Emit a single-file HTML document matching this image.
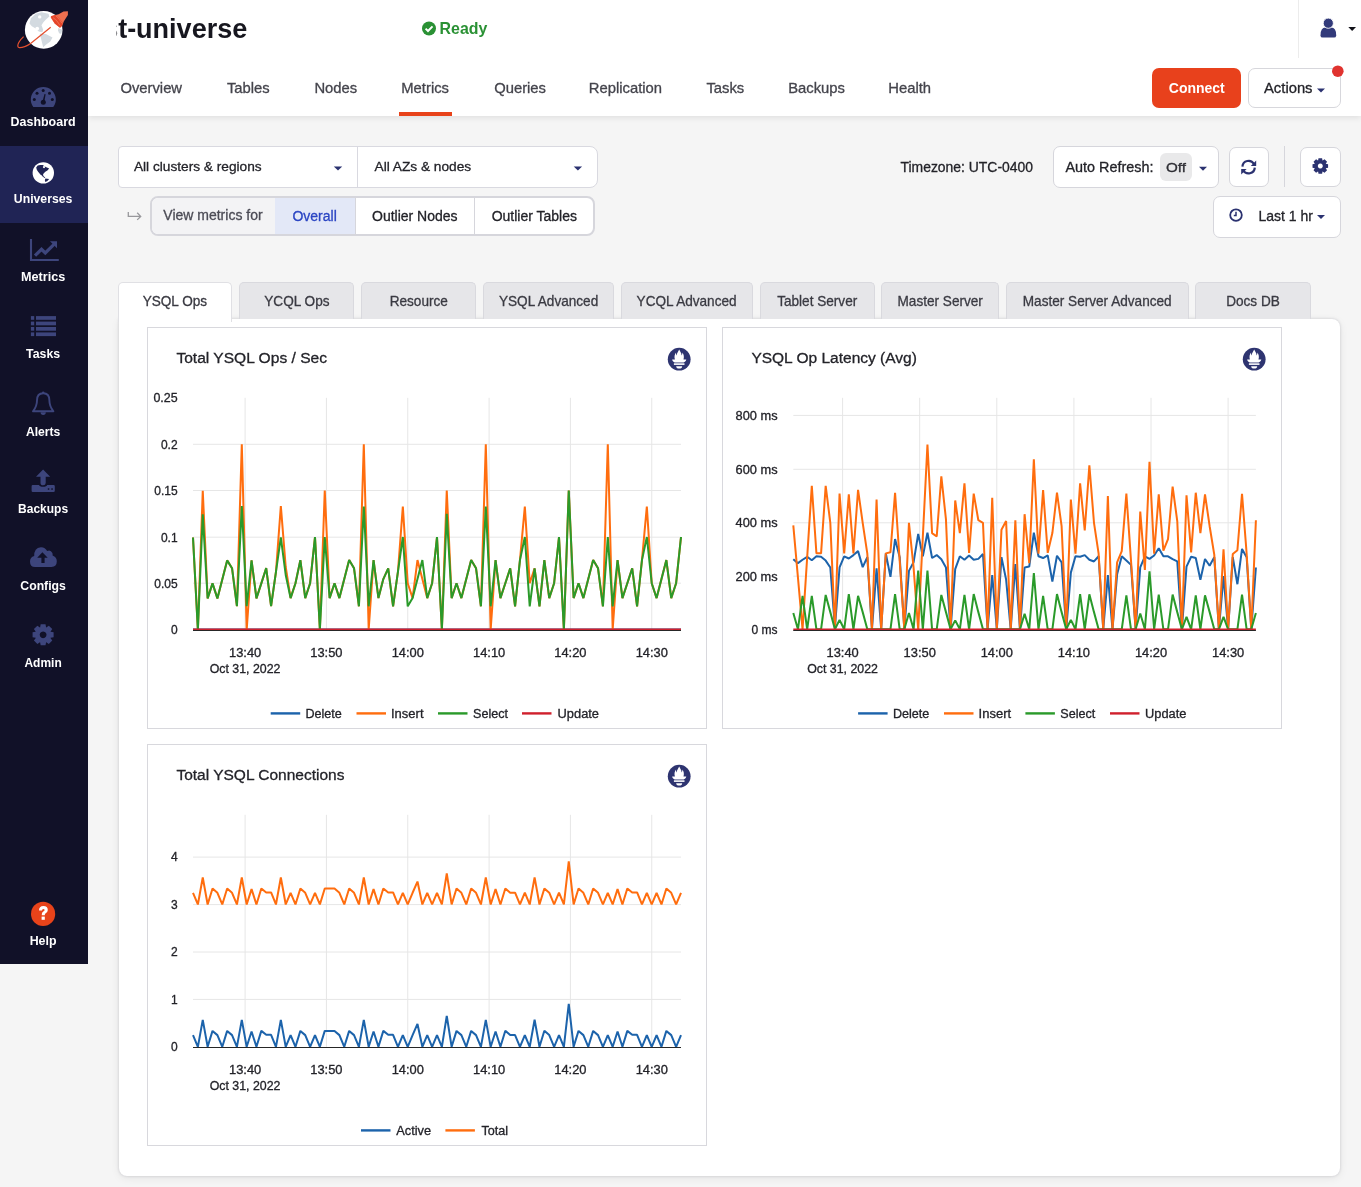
<!DOCTYPE html>
<html><head><meta charset="utf-8">
<style>
*{box-sizing:border-box;margin:0;padding:0}
html,body{width:1361px;height:1187px;overflow:hidden;background:#f5f5f5;font-family:"Liberation Sans",sans-serif}
svg text{font-family:"Liberation Sans",sans-serif}
</style></head><body>
<div style="position:absolute;left:0;top:0;width:88px;height:964px;background:#111128"></div>
<div style="position:absolute;left:0;top:146px;width:88px;height:77px;background:#202455"></div>
<div style="position:absolute;left:88px;top:0;width:1273px;height:116px;background:#fff;box-shadow:0 2px 6px rgba(0,0,0,0.085);clip-path:inset(0 0 -12px 0)"></div>
<div style="position:absolute;left:1298px;top:0;width:1px;height:58px;background:#ececec"></div>
<div style="position:absolute;left:399px;top:112px;width:53px;height:4px;background:#e8431a"></div>
<div style="position:absolute;left:1152px;top:68px;width:89px;height:40px;background:#e8411c;border-radius:7px"></div>
<div style="position:absolute;left:1248px;top:68px;width:93px;height:40px;background:#fff;border:1px solid #d7d7dc;border-radius:7px"></div>
<div style="position:absolute;left:118px;top:146px;width:480px;height:42px;background:#fff;border:1px solid #d9d9e0;border-radius:4px 8px 8px 4px"></div>
<div style="position:absolute;left:357px;top:147px;width:1px;height:40px;background:#d9d9e0"></div>
<div style="position:absolute;left:150px;top:196px;width:445px;height:40px;background:#fff;border:2px solid #d6d6dc;border-radius:8px"></div>
<div style="position:absolute;left:152px;top:198px;width:123px;height:36px;background:#f3f3f5;border-radius:6px 0 0 6px"></div>
<div style="position:absolute;left:275px;top:198px;width:80px;height:36px;background:#e3e8f7"></div>
<div style="position:absolute;left:355px;top:198px;width:1px;height:36px;background:#d6d6dc"></div>
<div style="position:absolute;left:474px;top:198px;width:1px;height:36px;background:#d6d6dc"></div>
<div style="position:absolute;left:1053px;top:146px;width:166px;height:42px;background:#fff;border:1px solid #d6d6dc;border-radius:7px"></div>
<div style="position:absolute;left:1160px;top:153px;width:32px;height:28px;background:#e9e9ea;border-radius:6px"></div>
<div style="position:absolute;left:1229px;top:147px;width:40px;height:40px;background:#fff;border:1px solid #d6d6dc;border-radius:7px"></div>
<div style="position:absolute;left:1284px;top:146px;width:1px;height:41px;background:#d6d6dc"></div>
<div style="position:absolute;left:1300px;top:147px;width:41px;height:40px;background:#fff;border:1px solid #d6d6dc;border-radius:7px"></div>
<div style="position:absolute;left:1213px;top:196px;width:128px;height:42px;background:#fff;border:1px solid #d6d6dc;border-radius:7px"></div>
<div style="position:absolute;left:119px;top:319px;width:1221px;height:857px;background:#fff;border-radius:0 8px 8px 8px;box-shadow:0 0 3px rgba(20,20,50,0.17), 0 2px 10px rgba(0,0,0,0.07)"></div>
<div style="position:absolute;left:117.6px;top:282px;width:114.7px;height:40px;background:#fff;border:1px solid #e0e0e4;border-bottom:none;border-radius:5px 5px 0 0"></div>
<div style="position:absolute;left:239.3px;top:282px;width:115.2px;height:37px;background:#e6e6e9;border:1px solid #d9d9de;border-bottom:none;border-radius:5px 5px 0 0"></div>
<div style="position:absolute;left:361.1px;top:282px;width:115.4px;height:37px;background:#e6e6e9;border:1px solid #d9d9de;border-bottom:none;border-radius:5px 5px 0 0"></div>
<div style="position:absolute;left:483.4px;top:282px;width:130.5px;height:37px;background:#e6e6e9;border:1px solid #d9d9de;border-bottom:none;border-radius:5px 5px 0 0"></div>
<div style="position:absolute;left:620.5px;top:282px;width:132.2px;height:37px;background:#e6e6e9;border:1px solid #d9d9de;border-bottom:none;border-radius:5px 5px 0 0"></div>
<div style="position:absolute;left:759.7px;top:282px;width:115.1px;height:37px;background:#e6e6e9;border:1px solid #d9d9de;border-bottom:none;border-radius:5px 5px 0 0"></div>
<div style="position:absolute;left:881.4px;top:282px;width:117.7px;height:37px;background:#e6e6e9;border:1px solid #d9d9de;border-bottom:none;border-radius:5px 5px 0 0"></div>
<div style="position:absolute;left:1005.7px;top:282px;width:183.0px;height:37px;background:#e6e6e9;border:1px solid #d9d9de;border-bottom:none;border-radius:5px 5px 0 0"></div>
<div style="position:absolute;left:1195.3px;top:282px;width:115.5px;height:37px;background:#e6e6e9;border:1px solid #d9d9de;border-bottom:none;border-radius:5px 5px 0 0"></div>
<div style="position:absolute;left:147px;top:327px;width:560px;height:402px;background:#fff;border:1px solid #d8d8dd"></div>
<div style="position:absolute;left:722px;top:327px;width:560px;height:402px;background:#fff;border:1px solid #d8d8dd"></div>
<div style="position:absolute;left:147px;top:744px;width:560px;height:402px;background:#fff;border:1px solid #d8d8dd"></div>
<svg style="position:absolute;left:0;top:0;will-change:transform" width="1361" height="1187" viewBox="0 0 1361 1187">
<text x="43.1" y="126.3" font-size="12.50" fill="#ffffff" font-weight="bold" text-anchor="middle" textLength="65.0" lengthAdjust="spacingAndGlyphs">Dashboard</text>
<text x="43.1" y="203.4" font-size="12.50" fill="#ffffff" font-weight="bold" text-anchor="middle" textLength="58.6" lengthAdjust="spacingAndGlyphs">Universes</text>
<text x="43.1" y="281.0" font-size="12.50" fill="#ffffff" font-weight="bold" text-anchor="middle" textLength="44.2" lengthAdjust="spacingAndGlyphs">Metrics</text>
<text x="43.1" y="358.1" font-size="12.50" fill="#ffffff" font-weight="bold" text-anchor="middle" textLength="34.0" lengthAdjust="spacingAndGlyphs">Tasks</text>
<text x="43.1" y="435.9" font-size="12.50" fill="#ffffff" font-weight="bold" text-anchor="middle" textLength="34.4" lengthAdjust="spacingAndGlyphs">Alerts</text>
<text x="43.1" y="513.2" font-size="12.50" fill="#ffffff" font-weight="bold" text-anchor="middle" textLength="50.0" lengthAdjust="spacingAndGlyphs">Backups</text>
<text x="43.1" y="590.0" font-size="12.50" fill="#ffffff" font-weight="bold" text-anchor="middle" textLength="45.6" lengthAdjust="spacingAndGlyphs">Configs</text>
<text x="43.1" y="666.6" font-size="12.50" fill="#ffffff" font-weight="bold" text-anchor="middle" textLength="37.2" lengthAdjust="spacingAndGlyphs">Admin</text>
<text x="43.1" y="944.7" font-size="12.50" fill="#ffffff" font-weight="bold" text-anchor="middle" textLength="26.8" lengthAdjust="spacingAndGlyphs">Help</text>
<g>
<circle cx="43.7" cy="29.9" r="18.8" fill="#ffffff"/>
<path d="M29.5 23.5 L30.9 18.2 L35.7 13.8 L41.5 12.3 L48.5 13.8 L49.4 16.5 L45.9 19.6 L43.2 22.6 L41.5 25.3 L43.2 29.7 L42.3 32.3 L38.8 31.5 L34.8 27.9 L31.8 26.2 Z" fill="#d3dae0"/>
<circle cx="39.7" cy="16.9" r="1.7" fill="#fff"/><circle cx="37.2" cy="28.6" r="1.9" fill="#fff"/>
<path d="M39.7 33.7 L45.9 34.1 L52.5 37.6 L50.3 41.6 L45.9 44.7 L43.2 47.3 L42.3 43.8 L41 38.5 Z" fill="#d3dae0"/>
<path d="M58.2 27.9 L62.2 29.7 L61.3 34.1 L59.1 33.2 L58 30.6 Z" fill="#d3dae0"/>
<path d="M51.2 16 L58.6 14.3 L63.5 11.6 L67.9 11.2 L67.9 15.1 L63.9 21.3 L62.2 25.7 L60 27.7 L54.7 23.5 L50.7 17.8 Z" fill="#ee6f4f"/>
<path d="M50.7 16.6 L55.5 14.8 L59.4 18.6 L62.5 22.5 L62.2 25.7 L60 27.7 L54.7 23.5 Z" fill="#e5452a"/>
<path d="M53 17.5 Q57.5 20.5 60 25.5 M55.8 15.8 Q59.5 19 61.8 23" stroke="#f07a5a" stroke-width="0.8" fill="none"/>
<path d="M50.7 27.2 L30.6 43.4 Q24 47.8 19.3 47.6 Q16.5 47 18.8 42.5 Q20.5 39.3 23.6 36.6" stroke="#e5502f" stroke-width="1.25" fill="none"/>
</g>
<path d="M33.3 107 A12.5 12.5 0 1 1 53.3 107 Z" fill="#3d457c"/>
<g fill="#111128"><circle cx="34.3" cy="99.6" r="1.5"/><circle cx="37" cy="93.3" r="1.5"/><circle cx="43.2" cy="90.5" r="1.5"/><circle cx="49.5" cy="93.3" r="1.5"/><circle cx="52.3" cy="99.6" r="1.5"/>
<circle cx="43.3" cy="102.2" r="2.5"/><path d="M42.4 102 L44.5 94 L45.6 94.3 L44.3 102 Z"/></g>
<circle cx="43.3" cy="172.9" r="10.7" fill="#ffffff"/>
<path d="M36.2 167.6 L37.7 165.5 L40.2 164.9 L42.7 165.1 L45.3 166.8 L49.1 168.5 L47.4 170.6 L45.3 171.8 L43.6 173.5 L43 174.8 L43.6 176.2 L45.3 177.6 L44.6 177.9 L42.6 176.4 L41.9 175.6 L40.6 174.8 L38.1 171.8 L36.8 169.7 Z" fill="#202455"/>
<circle cx="44" cy="167.1" r="1.1" fill="#fff"/>
<path d="M45.3 178.4 L49.1 179.1 L47.4 181.1 L45.3 181.9 L44.9 180.3 Z" fill="#202455"/>
<path d="M31 239 V260 H58.8" stroke="#3d457c" stroke-width="2.1" fill="none"/>
<path d="M35 255.7 L41.5 249.3 L45.3 253 L54 244.3" stroke="#3d457c" stroke-width="3.2" fill="none" stroke-linejoin="miter"/>
<path d="M50 241.2 L57 241.2 L57 248.2 Z" fill="#3d457c"/>
<rect x="30.9" y="316.1" width="3.3" height="3.7" rx="0" fill="#3d457c"/>
<rect x="36.0" y="316.1" width="20.0" height="3.7" rx="0" fill="#3d457c"/>
<rect x="30.9" y="321.6" width="3.3" height="3.7" rx="0" fill="#3d457c"/>
<rect x="36.0" y="321.6" width="20.0" height="3.7" rx="0" fill="#3d457c"/>
<rect x="30.9" y="327.0" width="3.3" height="3.7" rx="0" fill="#3d457c"/>
<rect x="36.0" y="327.0" width="20.0" height="3.7" rx="0" fill="#3d457c"/>
<rect x="30.9" y="332.4" width="3.3" height="3.7" rx="0" fill="#3d457c"/>
<rect x="36.0" y="332.4" width="20.0" height="3.7" rx="0" fill="#3d457c"/>
<path d="M43.2 393.3 C38.5 393.3 37 397 37 400.5 C37 405 35.6 408 33 411.3 L53.4 411.3 C50.8 408 49.4 405 49.4 400.5 C49.4 397 47.9 393.3 43.2 393.3 Z" stroke="#3d457c" stroke-width="1.9" fill="none" stroke-linejoin="round"/>
<circle cx="43.2" cy="392.6" r="1.2" fill="#3d457c"/>
<path d="M40.6 412.3 A2.6 2.6 0 0 0 45.8 412.3 Z" fill="#3d457c"/>
<path d="M43.1 469.6 L50.2 476.7 L45.7 476.7 L45.7 483 Q45.7 485.3 43.1 485.3 Q40.5 485.3 40.5 483 L40.5 476.7 L36 476.7 Z" fill="#3d457c"/>
<path d="M32.8 485 L39 485 Q39.5 486.8 43.1 486.8 Q46.7 486.8 47.2 485 L53.6 485 Q54.8 485 54.8 486.2 L54.8 490.8 Q54.8 492 53.6 492 L32.8 492 Q31.6 492 31.6 490.8 L31.6 486.2 Q31.6 485 32.8 485 Z" fill="#3d457c"/>
<rect x="47.8" y="488.3" width="1.5" height="1.5" fill="#111128"/><rect x="51.3" y="488.3" width="1.5" height="1.5" fill="#111128"/>
<path d="M35 567 Q30 567 30 561.5 Q30 557 34.2 556 Q34 548 40.8 547.2 Q45 547 47.2 551 Q50.5 549.3 52.4 553 Q52.8 554.5 52.6 555.5 Q56.8 557 56.8 561.3 Q56.8 567 51.5 567 Z" fill="#3d457c"/>
<path d="M42.4 552.2 L47.7 557.8 L44.6 557.8 L44.6 563 L41.4 563 L41.4 557.8 L37.2 557.8 Z" fill="#111128"/>
<path d="M40.67 624.28 L45.53 624.28 L46.10 627.38 L46.23 627.44 L48.82 625.64 L52.26 629.08 L50.46 631.67 L50.52 631.80 L53.62 632.37 L53.62 637.23 L50.52 637.80 L50.46 637.93 L52.26 640.52 L48.82 643.96 L46.23 642.16 L46.10 642.22 L45.53 645.32 L40.67 645.32 L40.10 642.22 L39.97 642.16 L37.38 643.96 L33.94 640.52 L35.74 637.93 L35.68 637.80 L32.58 637.23 L32.58 632.37 L35.68 631.80 L35.74 631.67 L33.94 629.08 L37.38 625.64 L39.97 627.44 L40.10 627.38 Z M43.1 631.4 a3.4 3.4 0 1 0 0.01 0 Z" fill="#3d457c" fill-rule="evenodd"/>
<circle cx="43.1" cy="913.9" r="12.1" fill="#e8431a"/>
<path d="M39 910.6 Q39 906 43.4 906 Q47.8 906 47.8 910 Q47.8 912.3 45.4 913.5 Q44.8 913.9 44.8 915.3 L41.7 915.3 Q41.5 912.4 43.6 911.3 Q44.6 910.8 44.6 910 Q44.6 908.9 43.3 908.9 Q42 908.9 42 910.6 Z" fill="#fff"/>
<rect x="41.6" y="916.6" width="3.2" height="3.2" fill="#fff"/>
<clipPath id="tclip"><rect x="116.5" y="0" width="300" height="60"/></clipPath>
<text x="247.2" y="37.5" font-size="27.00" fill="#17171f" font-weight="bold" text-anchor="end" clip-path="url(#tclip)">st-universe</text>
<circle cx="429" cy="28.5" r="7" fill="#2a9134"/><path d="M425.6 28.6 L428 31 L432.5 26.4" stroke="#fff" stroke-width="2" fill="none"/>
<text x="439.6" y="34.4" font-size="16.50" fill="#2a9134" font-weight="bold" text-anchor="start" textLength="47.8" lengthAdjust="spacingAndGlyphs">Ready</text>
<path d="M1320.5 35.4 Q1320.5 27.6 1325.5 27.6 H1331.2 Q1336.2 27.6 1336.2 35.4 Q1336.2 37.6 1334 37.6 H1322.7 Q1320.5 37.6 1320.5 35.4 Z" fill="#323a7a"/><circle cx="1328.3" cy="23.2" r="5.1" fill="#323a7a" stroke="#fff" stroke-width="0.9"/>
<path d="M1348.3 27.1 L1356 27.1 L1352.15 31 Z" fill="#111118"/>
<text x="120.4" y="93.2" font-size="14.80" fill="#44444c" stroke="#44444c" stroke-width="0.3" text-anchor="start">Overview</text>
<text x="226.9" y="93.2" font-size="14.80" fill="#44444c" stroke="#44444c" stroke-width="0.3" text-anchor="start">Tables</text>
<text x="314.4" y="93.2" font-size="14.80" fill="#44444c" stroke="#44444c" stroke-width="0.3" text-anchor="start">Nodes</text>
<text x="401.3" y="93.2" font-size="14.80" fill="#44444c" stroke="#44444c" stroke-width="0.3" text-anchor="start">Metrics</text>
<text x="494.2" y="93.2" font-size="14.80" fill="#44444c" stroke="#44444c" stroke-width="0.3" text-anchor="start">Queries</text>
<text x="588.8" y="93.2" font-size="14.80" fill="#44444c" stroke="#44444c" stroke-width="0.3" text-anchor="start">Replication</text>
<text x="706.4" y="93.2" font-size="14.80" fill="#44444c" stroke="#44444c" stroke-width="0.3" text-anchor="start">Tasks</text>
<text x="788.2" y="93.2" font-size="14.80" fill="#44444c" stroke="#44444c" stroke-width="0.3" text-anchor="start">Backups</text>
<text x="888.3" y="93.2" font-size="14.80" fill="#44444c" stroke="#44444c" stroke-width="0.3" text-anchor="start">Health</text>
<text x="1196.8" y="93.3" font-size="14.80" fill="#ffffff" font-weight="bold" text-anchor="middle" textLength="56.0" lengthAdjust="spacingAndGlyphs">Connect</text>
<text x="1264.0" y="93.3" font-size="14.80" fill="#232329" stroke="#232329" stroke-width="0.3" text-anchor="start">Actions</text>
<path d="M1317 88.5 L1325 88.5 L1321 92.5 Z" fill="#2b3270"/>
<circle cx="1337.8" cy="71.2" r="5.8" fill="#e0332f"/>
<text x="133.9" y="171.2" font-size="13.70" fill="#232329" stroke="#232329" stroke-width="0.3" text-anchor="start">All clusters &amp; regions</text>
<text x="374.5" y="171.2" font-size="13.70" fill="#232329" stroke="#232329" stroke-width="0.3" text-anchor="start">All AZs &amp; nodes</text>
<path d="M333.8 166.6 L342.2 166.6 L338 170.6 Z" fill="#2b3270"/>
<path d="M573.7 166.6 L582.1 166.6 L577.9 170.6 Z" fill="#2b3270"/>
<path d="M128.3 212 V216.4 H140.3 M137.2 212.8 L140.7 216.4 L137.2 219.9" stroke="#98989c" stroke-width="1.3" fill="none"/>
<text x="163.3" y="220.3" font-size="14.00" fill="#4b4b55" stroke="#4b4b55" stroke-width="0.3" text-anchor="start">View metrics for</text>
<text x="314.6" y="221.0" font-size="14.00" fill="#2b45c3" stroke="#2b45c3" stroke-width="0.3" text-anchor="middle">Overall</text>
<text x="414.8" y="221.0" font-size="14.00" fill="#232329" stroke="#232329" stroke-width="0.3" text-anchor="middle">Outlier Nodes</text>
<text x="534.3" y="221.0" font-size="14.00" fill="#232329" stroke="#232329" stroke-width="0.3" text-anchor="middle">Outlier Tables</text>
<text x="900.5" y="172.0" font-size="14.00" fill="#232329" stroke="#232329" stroke-width="0.3" text-anchor="start" textLength="132.5" lengthAdjust="spacingAndGlyphs">Timezone: UTC-0400</text>
<text x="1065.4" y="172.0" font-size="14.30" fill="#232329" stroke="#232329" stroke-width="0.3" text-anchor="start" textLength="88.0" lengthAdjust="spacingAndGlyphs">Auto Refresh:</text>
<text x="1176.0" y="172.2" font-size="13.00" fill="#2e2e34" stroke="#2e2e34" stroke-width="0.3" text-anchor="middle" textLength="20.0" lengthAdjust="spacingAndGlyphs">Off</text>
<path d="M1199 166.8 L1207 166.8 L1203 170.8 Z" fill="#2b3270"/>
<g fill="none" stroke="#2b3270" stroke-width="2.2"><path d="M1242.4 166.6 A6.2 6.2 0 0 1 1254 164"/><path d="M1254.8 167.6 A6.2 6.2 0 0 1 1243.2 170.2"/></g>
<path d="M1256.2 160.6 L1256.2 166 L1250.8 166 Z" fill="#2b3270"/><path d="M1241.2 174.4 L1241.2 169 L1246.6 169 Z" fill="#2b3270"/>
<path d="M1318.50 158.21 L1322.10 158.21 L1322.51 160.53 L1322.61 160.57 L1324.54 159.22 L1327.08 161.76 L1325.73 163.69 L1325.77 163.79 L1328.09 164.20 L1328.09 167.80 L1325.77 168.21 L1325.73 168.31 L1327.08 170.24 L1324.54 172.78 L1322.61 171.43 L1322.51 171.47 L1322.10 173.79 L1318.50 173.79 L1318.09 171.47 L1317.99 171.43 L1316.06 172.78 L1313.52 170.24 L1314.87 168.31 L1314.83 168.21 L1312.51 167.80 L1312.51 164.20 L1314.83 163.79 L1314.87 163.69 L1313.52 161.76 L1316.06 159.22 L1317.99 160.57 L1318.09 160.53 Z M1320.3 163.5 a2.5 2.5 0 1 0 0.01 0 Z" fill="#2b3270" fill-rule="evenodd"/>
<circle cx="1236" cy="215.1" r="5.8" fill="none" stroke="#2b3270" stroke-width="1.8"/><path d="M1236 211.8 V215.6 H1233.8" fill="none" stroke="#2b3270" stroke-width="1.5"/>
<text x="1258.4" y="220.8" font-size="14.80" fill="#232329" stroke="#232329" stroke-width="0.3" text-anchor="start" textLength="54.5" lengthAdjust="spacingAndGlyphs">Last 1 hr</text>
<path d="M1317 215 L1325 215 L1321 219 Z" fill="#2b3270"/>
<text x="174.9" y="305.8" font-size="14.20" fill="#3a3a42" stroke="#3a3a42" stroke-width="0.3" text-anchor="middle" textLength="64.5" lengthAdjust="spacingAndGlyphs">YSQL Ops</text>
<text x="296.9" y="305.8" font-size="14.20" fill="#3a3a42" stroke="#3a3a42" stroke-width="0.3" text-anchor="middle" textLength="65.3" lengthAdjust="spacingAndGlyphs">YCQL Ops</text>
<text x="418.8" y="305.8" font-size="14.20" fill="#3a3a42" stroke="#3a3a42" stroke-width="0.3" text-anchor="middle" textLength="58.2" lengthAdjust="spacingAndGlyphs">Resource</text>
<text x="548.6" y="305.8" font-size="14.20" fill="#3a3a42" stroke="#3a3a42" stroke-width="0.3" text-anchor="middle" textLength="99.3" lengthAdjust="spacingAndGlyphs">YSQL Advanced</text>
<text x="686.6" y="305.8" font-size="14.20" fill="#3a3a42" stroke="#3a3a42" stroke-width="0.3" text-anchor="middle" textLength="100.0" lengthAdjust="spacingAndGlyphs">YCQL Advanced</text>
<text x="817.2" y="305.8" font-size="14.20" fill="#3a3a42" stroke="#3a3a42" stroke-width="0.3" text-anchor="middle" textLength="80.1" lengthAdjust="spacingAndGlyphs">Tablet Server</text>
<text x="940.2" y="305.8" font-size="14.20" fill="#3a3a42" stroke="#3a3a42" stroke-width="0.3" text-anchor="middle" textLength="85.4" lengthAdjust="spacingAndGlyphs">Master Server</text>
<text x="1097.2" y="305.8" font-size="14.20" fill="#3a3a42" stroke="#3a3a42" stroke-width="0.3" text-anchor="middle" textLength="148.9" lengthAdjust="spacingAndGlyphs">Master Server Advanced</text>
<text x="1253.0" y="305.8" font-size="14.20" fill="#3a3a42" stroke="#3a3a42" stroke-width="0.3" text-anchor="middle" textLength="53.7" lengthAdjust="spacingAndGlyphs">Docs DB</text>
<text x="176.4" y="363.1" font-size="15.50" fill="#232329" stroke="#232329" stroke-width="0.3" text-anchor="start" textLength="150.6" lengthAdjust="spacingAndGlyphs">Total YSQL Ops / Sec</text>
<circle cx="679.2" cy="359.2" r="11.4" fill="#2e3470"/>
<g transform="translate(679.20 359.20)" fill="#fff"><path d="M0 -9.6 C0.9 -7.2 2.6 -6.2 2.3 -3.6 C3.1 -4.4 3.3 -5.6 3.1 -6.6 C4.7 -4.6 5.1 -2.1 4.3 0.2 L7.1 0.4 C6.6 2.4 5.6 3 4.5 3.2 H-4.5 C-5.6 3 -6.6 2.4 -7.1 0.4 L-4.3 0.2 C-5.1 -2.1 -4.7 -4.6 -3.1 -6.6 C-3.3 -5.6 -3.1 -4.4 -2.3 -3.6 C-2.6 -6.2 -0.9 -7.2 0 -9.6 Z"/><rect x="-5.3" y="4.1" width="10.6" height="1.6"/><path d="M-3 7 H3 A3 2.3 0 0 1 -3 7 Z"/></g>
<line x1="193.0" y1="444.30" x2="681.0" y2="444.30" stroke="#e6e6e6" stroke-width="1"/>
<line x1="193.0" y1="490.50" x2="681.0" y2="490.50" stroke="#e6e6e6" stroke-width="1"/>
<line x1="193.0" y1="537.20" x2="681.0" y2="537.20" stroke="#e6e6e6" stroke-width="1"/>
<line x1="193.0" y1="583.20" x2="681.0" y2="583.20" stroke="#e6e6e6" stroke-width="1"/>
<line x1="245.10" y1="397.8" x2="245.10" y2="629.60" stroke="#e6e6e6" stroke-width="1"/>
<line x1="326.43" y1="397.8" x2="326.43" y2="629.60" stroke="#e6e6e6" stroke-width="1"/>
<line x1="407.76" y1="397.8" x2="407.76" y2="629.60" stroke="#e6e6e6" stroke-width="1"/>
<line x1="489.09" y1="397.8" x2="489.09" y2="629.60" stroke="#e6e6e6" stroke-width="1"/>
<line x1="570.42" y1="397.8" x2="570.42" y2="629.60" stroke="#e6e6e6" stroke-width="1"/>
<line x1="651.75" y1="397.8" x2="651.75" y2="629.60" stroke="#e6e6e6" stroke-width="1"/>
<text x="177.6" y="401.9" font-size="12.00" fill="#232329" stroke="#232329" stroke-width="0.3" text-anchor="end" textLength="24.2" lengthAdjust="spacingAndGlyphs">0.25</text>
<text x="177.6" y="448.6" font-size="12.00" fill="#232329" stroke="#232329" stroke-width="0.3" text-anchor="end">0.2</text>
<text x="177.6" y="494.8" font-size="12.00" fill="#232329" stroke="#232329" stroke-width="0.3" text-anchor="end">0.15</text>
<text x="177.6" y="541.5" font-size="12.00" fill="#232329" stroke="#232329" stroke-width="0.3" text-anchor="end">0.1</text>
<text x="177.6" y="587.5" font-size="12.00" fill="#232329" stroke="#232329" stroke-width="0.3" text-anchor="end">0.05</text>
<text x="177.6" y="633.9" font-size="12.00" fill="#232329" stroke="#232329" stroke-width="0.3" text-anchor="end">0</text>
<path d="M193.00 629.60 L197.88 629.60 L202.76 629.60 L207.64 629.60 L212.52 629.60 L217.40 629.60 L222.28 629.60 L227.16 629.60 L232.04 629.60 L236.92 629.60 L241.80 629.60 L246.68 629.60 L251.56 629.60 L256.44 629.60 L261.32 629.60 L266.20 629.60 L271.08 629.60 L275.96 629.60 L280.84 629.60 L285.72 629.60 L290.60 629.60 L295.48 629.60 L300.36 629.60 L305.24 629.60 L310.12 629.60 L315.00 629.60 L319.88 629.60 L324.76 629.60 L329.64 629.60 L334.52 629.60 L339.40 629.60 L344.28 629.60 L349.16 629.60 L354.04 629.60 L358.92 629.60 L363.80 629.60 L368.68 629.60 L373.56 629.60 L378.44 629.60 L383.32 629.60 L388.20 629.60 L393.08 629.60 L397.96 629.60 L402.84 629.60 L407.72 629.60 L412.60 629.60 L417.48 629.60 L422.36 629.60 L427.24 629.60 L432.12 629.60 L437.00 629.60 L441.88 629.60 L446.76 629.60 L451.64 629.60 L456.52 629.60 L461.40 629.60 L466.28 629.60 L471.16 629.60 L476.04 629.60 L480.92 629.60 L485.80 629.60 L490.68 629.60 L495.56 629.60 L500.44 629.60 L505.32 629.60 L510.20 629.60 L515.08 629.60 L519.96 629.60 L524.84 629.60 L529.72 629.60 L534.60 629.60 L539.48 629.60 L544.36 629.60 L549.24 629.60 L554.12 629.60 L559.00 629.60 L563.88 629.60 L568.76 629.60 L573.64 629.60 L578.52 629.60 L583.40 629.60 L588.28 629.60 L593.16 629.60 L598.04 629.60 L602.92 629.60 L607.80 629.60 L612.68 629.60 L617.56 629.60 L622.44 629.60 L627.32 629.60 L632.20 629.60 L637.08 629.60 L641.96 629.60 L646.84 629.60 L651.72 629.60 L656.60 629.60 L661.48 629.60 L666.36 629.60 L671.24 629.60 L676.12 629.60 L681.00 629.60" fill="none" stroke="#1c63ab" stroke-width="2.0" stroke-linejoin="bevel"/>
<path d="M193.00 537.43 L197.88 630.00 L202.76 490.79 L207.64 598.39 L212.52 583.37 L217.40 598.39 L222.28 579.40 L227.16 560.40 L232.04 568.17 L236.92 606.17 L241.80 444.34 L246.68 630.00 L251.56 560.40 L256.44 598.39 L261.32 583.37 L266.20 568.17 L271.08 606.17 L275.96 571.80 L280.84 505.99 L285.72 567.00 L290.60 598.07 L295.48 583.21 L300.36 560.11 L305.24 598.07 L310.12 583.21 L315.00 537.01 L319.88 629.42 L324.76 490.48 L329.64 598.07 L334.52 583.21 L339.40 598.07 L344.28 579.09 L349.16 560.11 L354.04 568.36 L358.92 606.32 L363.80 444.27 L368.68 629.42 L373.56 560.11 L378.44 598.07 L383.32 579.09 L388.20 568.36 L393.08 606.32 L397.96 571.66 L402.84 506.48 L407.72 583.21 L412.60 598.07 L417.48 560.11 L422.36 579.09 L427.24 598.07 L432.12 583.21 L437.00 537.01 L441.88 629.42 L446.76 490.48 L451.64 598.07 L456.52 583.21 L461.40 598.07 L466.28 579.09 L471.16 560.11 L476.04 568.36 L480.92 606.32 L485.80 444.27 L490.68 629.42 L495.56 560.11 L500.44 598.07 L505.32 583.21 L510.20 568.36 L515.08 606.32 L519.96 560.11 L524.84 506.48 L529.72 583.21 L534.60 568.36 L539.48 606.32 L544.36 560.11 L549.24 598.07 L554.12 583.21 L559.00 537.01 L563.88 629.42 L568.76 490.48 L573.64 598.07 L578.52 583.21 L583.40 598.07 L588.28 579.09 L593.16 560.11 L598.04 568.36 L602.92 606.32 L607.80 444.27 L612.68 629.42 L617.56 560.11 L622.44 598.07 L627.32 583.21 L632.20 568.36 L637.08 606.32 L641.96 560.11 L646.84 506.48 L651.72 583.21 L656.60 598.07 L661.48 579.09 L666.36 560.11 L671.24 598.07 L676.12 583.21 L681.00 537.01" fill="none" stroke="#ff6d0e" stroke-width="2.0" stroke-linejoin="bevel"/>
<path d="M193.00 537.43 L197.88 630.00 L202.76 514.28 L207.64 598.39 L212.52 583.37 L217.40 598.39 L222.28 579.40 L227.16 560.40 L232.04 568.17 L236.92 606.17 L241.80 505.99 L246.68 606.17 L251.56 560.40 L256.44 598.39 L261.32 583.37 L266.20 568.17 L271.08 606.17 L275.96 571.80 L280.84 537.43 L285.72 574.96 L290.60 598.07 L295.48 583.21 L300.36 560.11 L305.24 598.07 L310.12 583.21 L315.00 537.01 L319.88 629.42 L324.76 537.01 L329.64 598.07 L334.52 583.21 L339.40 598.07 L344.28 579.09 L349.16 560.11 L354.04 568.36 L358.92 606.32 L363.80 506.48 L368.68 606.32 L373.56 560.11 L378.44 598.07 L383.32 579.09 L388.20 568.36 L393.08 606.32 L397.96 571.66 L402.84 537.01 L407.72 606.32 L412.60 598.07 L417.48 579.09 L422.36 560.11 L427.24 598.07 L432.12 583.21 L437.00 537.01 L441.88 629.42 L446.76 513.91 L451.64 598.07 L456.52 583.21 L461.40 598.07 L466.28 579.09 L471.16 560.11 L476.04 568.36 L480.92 606.32 L485.80 506.48 L490.68 606.32 L495.56 560.11 L500.44 598.07 L505.32 583.21 L510.20 568.36 L515.08 606.32 L519.96 560.11 L524.84 537.01 L529.72 606.32 L534.60 568.36 L539.48 606.32 L544.36 560.11 L549.24 598.07 L554.12 583.21 L559.00 537.01 L563.88 629.42 L568.76 490.48 L573.64 598.07 L578.52 583.21 L583.40 598.07 L588.28 579.09 L593.16 560.11 L598.04 568.36 L602.92 606.32 L607.80 537.01 L612.68 606.32 L617.56 560.11 L622.44 598.07 L627.32 583.21 L632.20 568.36 L637.08 606.32 L641.96 560.11 L646.84 537.01 L651.72 583.21 L656.60 598.07 L661.48 579.09 L666.36 560.11 L671.24 598.07 L676.12 583.21 L681.00 537.01" fill="none" stroke="#2a9a2a" stroke-width="2.0" stroke-linejoin="bevel"/>
<path d="M193.00 629.60 L197.88 629.60 L202.76 629.60 L207.64 629.60 L212.52 629.60 L217.40 629.60 L222.28 629.60 L227.16 629.60 L232.04 629.60 L236.92 629.60 L241.80 629.60 L246.68 629.60 L251.56 629.60 L256.44 629.60 L261.32 629.60 L266.20 629.60 L271.08 629.60 L275.96 629.60 L280.84 629.60 L285.72 629.60 L290.60 629.60 L295.48 629.60 L300.36 629.60 L305.24 629.60 L310.12 629.60 L315.00 629.60 L319.88 629.60 L324.76 629.60 L329.64 629.60 L334.52 629.60 L339.40 629.60 L344.28 629.60 L349.16 629.60 L354.04 629.60 L358.92 629.60 L363.80 629.60 L368.68 629.60 L373.56 629.60 L378.44 629.60 L383.32 629.60 L388.20 629.60 L393.08 629.60 L397.96 629.60 L402.84 629.60 L407.72 629.60 L412.60 629.60 L417.48 629.60 L422.36 629.60 L427.24 629.60 L432.12 629.60 L437.00 629.60 L441.88 629.60 L446.76 629.60 L451.64 629.60 L456.52 629.60 L461.40 629.60 L466.28 629.60 L471.16 629.60 L476.04 629.60 L480.92 629.60 L485.80 629.60 L490.68 629.60 L495.56 629.60 L500.44 629.60 L505.32 629.60 L510.20 629.60 L515.08 629.60 L519.96 629.60 L524.84 629.60 L529.72 629.60 L534.60 629.60 L539.48 629.60 L544.36 629.60 L549.24 629.60 L554.12 629.60 L559.00 629.60 L563.88 629.60 L568.76 629.60 L573.64 629.60 L578.52 629.60 L583.40 629.60 L588.28 629.60 L593.16 629.60 L598.04 629.60 L602.92 629.60 L607.80 629.60 L612.68 629.60 L617.56 629.60 L622.44 629.60 L627.32 629.60 L632.20 629.60 L637.08 629.60 L641.96 629.60 L646.84 629.60 L651.72 629.60 L656.60 629.60 L661.48 629.60 L666.36 629.60 L671.24 629.60 L676.12 629.60 L681.00 629.60" fill="none" stroke="#d0202d" stroke-width="2.0" stroke-linejoin="bevel"/>
<line x1="193.0" y1="630.50" x2="681.0" y2="630.50" stroke="#262626" stroke-width="1"/>
<text x="245.1" y="657.0" font-size="12.00" fill="#232329" stroke="#232329" stroke-width="0.3" text-anchor="middle" textLength="32.2" lengthAdjust="spacingAndGlyphs">13:40</text>
<text x="326.4" y="657.0" font-size="12.00" fill="#232329" stroke="#232329" stroke-width="0.3" text-anchor="middle" textLength="32.2" lengthAdjust="spacingAndGlyphs">13:50</text>
<text x="407.8" y="657.0" font-size="12.00" fill="#232329" stroke="#232329" stroke-width="0.3" text-anchor="middle" textLength="32.2" lengthAdjust="spacingAndGlyphs">14:00</text>
<text x="489.1" y="657.0" font-size="12.00" fill="#232329" stroke="#232329" stroke-width="0.3" text-anchor="middle" textLength="32.2" lengthAdjust="spacingAndGlyphs">14:10</text>
<text x="570.4" y="657.0" font-size="12.00" fill="#232329" stroke="#232329" stroke-width="0.3" text-anchor="middle" textLength="32.2" lengthAdjust="spacingAndGlyphs">14:20</text>
<text x="651.8" y="657.0" font-size="12.00" fill="#232329" stroke="#232329" stroke-width="0.3" text-anchor="middle" textLength="32.2" lengthAdjust="spacingAndGlyphs">14:30</text>
<text x="245.1" y="672.7" font-size="12.00" fill="#232329" stroke="#232329" stroke-width="0.3" text-anchor="middle" textLength="70.8" lengthAdjust="spacingAndGlyphs">Oct 31, 2022</text>
<line x1="270.7" y1="713.4" x2="300.2" y2="713.4" stroke="#1c63ab" stroke-width="2.4"/>
<text x="305.4" y="718.0" font-size="12.50" fill="#232329" stroke="#232329" stroke-width="0.3" text-anchor="start" textLength="36.4" lengthAdjust="spacingAndGlyphs">Delete</text>
<line x1="356.5" y1="713.4" x2="386.0" y2="713.4" stroke="#ff6d0e" stroke-width="2.4"/>
<text x="391.0" y="718.0" font-size="12.50" fill="#232329" stroke="#232329" stroke-width="0.3" text-anchor="start" textLength="32.5" lengthAdjust="spacingAndGlyphs">Insert</text>
<line x1="438.0" y1="713.4" x2="467.5" y2="713.4" stroke="#2a9a2a" stroke-width="2.4"/>
<text x="473.0" y="718.0" font-size="12.50" fill="#232329" stroke="#232329" stroke-width="0.3" text-anchor="start" textLength="35.0" lengthAdjust="spacingAndGlyphs">Select</text>
<line x1="522.0" y1="713.4" x2="551.5" y2="713.4" stroke="#d0202d" stroke-width="2.4"/>
<text x="557.6" y="718.0" font-size="12.50" fill="#232329" stroke="#232329" stroke-width="0.3" text-anchor="start" textLength="41.4" lengthAdjust="spacingAndGlyphs">Update</text>
<text x="751.4" y="363.1" font-size="15.50" fill="#232329" stroke="#232329" stroke-width="0.3" text-anchor="start">YSQL Op Latency (Avg)</text>
<circle cx="1254.2" cy="359.2" r="11.4" fill="#2e3470"/>
<g transform="translate(1254.20 359.20)" fill="#fff"><path d="M0 -9.6 C0.9 -7.2 2.6 -6.2 2.3 -3.6 C3.1 -4.4 3.3 -5.6 3.1 -6.6 C4.7 -4.6 5.1 -2.1 4.3 0.2 L7.1 0.4 C6.6 2.4 5.6 3 4.5 3.2 H-4.5 C-5.6 3 -6.6 2.4 -7.1 0.4 L-4.3 0.2 C-5.1 -2.1 -4.7 -4.6 -3.1 -6.6 C-3.3 -5.6 -3.1 -4.4 -2.3 -3.6 C-2.6 -6.2 -0.9 -7.2 0 -9.6 Z"/><rect x="-5.3" y="4.1" width="10.6" height="1.6"/><path d="M-3 7 H3 A3 2.3 0 0 1 -3 7 Z"/></g>
<line x1="793.3" y1="415.40" x2="1255.9" y2="415.40" stroke="#e6e6e6" stroke-width="1"/>
<line x1="793.3" y1="469.30" x2="1255.9" y2="469.30" stroke="#e6e6e6" stroke-width="1"/>
<line x1="793.3" y1="522.80" x2="1255.9" y2="522.80" stroke="#e6e6e6" stroke-width="1"/>
<line x1="793.3" y1="576.20" x2="1255.9" y2="576.20" stroke="#e6e6e6" stroke-width="1"/>
<line x1="842.60" y1="397.8" x2="842.60" y2="629.40" stroke="#e6e6e6" stroke-width="1"/>
<line x1="919.70" y1="397.8" x2="919.70" y2="629.40" stroke="#e6e6e6" stroke-width="1"/>
<line x1="996.80" y1="397.8" x2="996.80" y2="629.40" stroke="#e6e6e6" stroke-width="1"/>
<line x1="1073.90" y1="397.8" x2="1073.90" y2="629.40" stroke="#e6e6e6" stroke-width="1"/>
<line x1="1151.00" y1="397.8" x2="1151.00" y2="629.40" stroke="#e6e6e6" stroke-width="1"/>
<line x1="1228.10" y1="397.8" x2="1228.10" y2="629.40" stroke="#e6e6e6" stroke-width="1"/>
<text x="777.6" y="419.6" font-size="12.00" fill="#232329" stroke="#232329" stroke-width="0.3" text-anchor="end" textLength="42.0" lengthAdjust="spacingAndGlyphs">800 ms</text>
<text x="777.6" y="473.6" font-size="12.00" fill="#232329" stroke="#232329" stroke-width="0.3" text-anchor="end" textLength="42.0" lengthAdjust="spacingAndGlyphs">600 ms</text>
<text x="777.6" y="527.0" font-size="12.00" fill="#232329" stroke="#232329" stroke-width="0.3" text-anchor="end" textLength="42.0" lengthAdjust="spacingAndGlyphs">400 ms</text>
<text x="777.6" y="580.5" font-size="12.00" fill="#232329" stroke="#232329" stroke-width="0.3" text-anchor="end" textLength="42.0" lengthAdjust="spacingAndGlyphs">200 ms</text>
<text x="777.6" y="633.9" font-size="12.00" fill="#232329" stroke="#232329" stroke-width="0.3" text-anchor="end">0 ms</text>
<path d="M793.30 559.21 L797.93 563.16 L802.55 559.73 L807.18 556.80 L811.80 560.24 L816.43 556.29 L821.06 556.80 L825.68 560.58 L830.31 567.46 L834.93 627.59 L839.56 567.46 L844.19 556.29 L848.81 558.52 L853.44 555.09 L858.06 551.13 L862.69 567.11 L867.32 557.15 L871.94 629.31 L876.57 568.32 L881.19 629.31 L885.82 553.37 L890.45 576.91 L895.07 539.11 L899.70 557.15 L904.32 629.31 L908.95 570.89 L913.58 562.30 L918.20 533.95 L922.83 556.29 L927.45 532.75 L932.08 558.01 L936.71 555.09 L941.33 559.30 L945.96 567.46 L950.58 629.31 L955.21 569.18 L959.84 556.29 L964.46 559.73 L969.09 555.43 L973.71 559.73 L978.34 558.87 L982.97 554.05 L987.59 629.31 L992.22 575.19 L996.84 629.31 L1001.47 557.15 L1006.10 579.48 L1010.72 629.31 L1015.35 564.02 L1019.97 629.31 L1024.60 567.46 L1029.23 566.60 L1033.85 532.75 L1038.48 556.29 L1043.10 558.01 L1047.73 555.43 L1052.36 581.55 L1056.98 555.77 L1061.61 562.30 L1066.23 629.31 L1070.86 572.61 L1075.49 556.29 L1080.11 556.80 L1084.74 555.09 L1089.36 559.73 L1093.99 561.44 L1098.62 556.29 L1103.24 629.31 L1107.87 575.19 L1112.49 629.31 L1117.12 574.33 L1121.75 556.29 L1126.37 560.58 L1131.00 564.88 L1135.62 629.31 L1140.25 567.46 L1144.88 556.29 L1149.50 558.87 L1154.13 555.43 L1158.75 548.21 L1163.38 556.29 L1168.01 556.29 L1172.63 559.21 L1177.26 561.44 L1181.88 629.31 L1186.51 566.60 L1191.14 556.80 L1195.76 558.01 L1200.39 579.83 L1205.01 559.04 L1209.64 565.74 L1214.27 557.15 L1218.89 629.31 L1223.52 576.05 L1228.14 629.31 L1232.77 557.15 L1237.40 584.21 L1242.02 548.90 L1246.65 557.15 L1251.27 629.31 L1255.90 567.46" fill="none" stroke="#1c63ab" stroke-width="2.0" stroke-linejoin="bevel"/>
<path d="M793.30 525.36 L797.93 577.42 L802.55 629.31 L807.18 557.15 L811.80 485.84 L816.43 553.37 L821.06 553.37 L825.68 485.84 L830.31 522.78 L834.93 629.31 L839.56 493.57 L844.19 553.37 L848.81 494.43 L853.44 553.37 L858.06 489.79 L862.69 522.78 L867.32 553.71 L871.94 629.31 L876.57 499.59 L881.19 629.31 L885.82 553.37 L890.45 552.34 L895.07 492.71 L899.70 560.93 L904.32 629.31 L908.95 522.78 L913.58 567.46 L918.20 629.31 L922.83 536.87 L927.45 444.60 L932.08 533.09 L936.71 536.53 L941.33 476.39 L945.96 519.35 L950.58 629.31 L955.21 500.45 L959.84 533.09 L964.46 483.26 L969.09 552.85 L973.71 493.57 L978.34 520.21 L982.97 522.78 L987.59 629.31 L992.22 497.87 L996.84 629.31 L1001.47 529.66 L1006.10 521.07 L1010.72 629.31 L1015.35 520.21 L1019.97 629.31 L1024.60 514.19 L1029.23 563.16 L1033.85 459.21 L1038.48 553.71 L1043.10 490.14 L1047.73 552.85 L1052.36 533.09 L1056.98 492.71 L1061.61 526.22 L1066.23 629.31 L1070.86 499.59 L1075.49 553.71 L1080.11 483.26 L1084.74 530.52 L1089.36 465.22 L1093.99 522.78 L1098.62 553.71 L1103.24 629.31 L1107.87 496.15 L1112.49 629.31 L1117.12 562.30 L1121.75 551.13 L1126.37 493.57 L1131.00 560.58 L1135.62 629.31 L1140.25 511.62 L1144.88 570.03 L1149.50 461.79 L1154.13 553.71 L1158.75 494.43 L1163.38 550.70 L1168.01 539.11 L1172.63 486.70 L1177.26 521.07 L1181.88 629.31 L1186.51 495.29 L1191.14 552.34 L1195.76 492.71 L1200.39 533.09 L1205.01 494.43 L1209.64 526.22 L1214.27 554.57 L1218.89 629.31 L1223.52 549.42 L1228.14 629.31 L1232.77 554.05 L1237.40 550.27 L1242.02 493.92 L1246.65 553.71 L1251.27 629.31 L1255.90 520.21" fill="none" stroke="#ff6d0e" stroke-width="2.0" stroke-linejoin="bevel"/>
<path d="M793.30 612.99 L797.93 629.31 L802.55 595.81 L807.18 629.31 L811.80 595.81 L816.43 629.31 L821.06 629.31 L825.68 594.95 L830.31 612.13 L834.93 629.31 L839.56 619.86 L844.19 629.31 L848.81 594.09 L853.44 629.31 L858.06 595.81 L862.69 612.13 L867.32 629.31 L871.94 629.31 L876.57 629.31 L881.19 629.31 L885.82 629.31 L890.45 629.31 L895.07 594.09 L899.70 629.31 L904.32 629.31 L908.95 612.99 L913.58 629.31 L918.20 570.55 L922.83 629.31 L927.45 570.55 L932.08 629.31 L936.71 629.31 L941.33 594.95 L945.96 612.13 L950.58 629.31 L955.21 620.38 L959.84 629.31 L964.46 594.95 L969.09 629.31 L973.71 594.09 L978.34 612.13 L982.97 629.31 L987.59 629.31 L992.22 629.31 L996.84 629.31 L1001.47 629.31 L1006.10 629.31 L1010.72 629.31 L1015.35 629.31 L1019.97 629.31 L1024.60 613.85 L1029.23 629.31 L1033.85 572.96 L1038.48 629.31 L1043.10 595.81 L1047.73 629.31 L1052.36 629.31 L1056.98 594.09 L1061.61 612.13 L1066.23 629.31 L1070.86 619.86 L1075.49 629.31 L1080.11 594.09 L1084.74 629.31 L1089.36 594.35 L1093.99 612.13 L1098.62 629.31 L1103.24 629.31 L1107.87 629.31 L1112.49 629.31 L1117.12 629.31 L1121.75 629.31 L1126.37 595.29 L1131.00 629.31 L1135.62 629.31 L1140.25 613.51 L1144.88 629.31 L1149.50 571.24 L1154.13 629.31 L1158.75 594.60 L1163.38 629.31 L1168.01 629.31 L1172.63 594.60 L1177.26 612.13 L1181.88 629.31 L1186.51 616.94 L1191.14 629.31 L1195.76 595.29 L1200.39 629.31 L1205.01 595.29 L1209.64 612.13 L1214.27 629.31 L1218.89 629.31 L1223.52 616.94 L1228.14 629.31 L1232.77 629.31 L1237.40 629.31 L1242.02 594.60 L1246.65 629.31 L1251.27 629.31 L1255.90 612.99" fill="none" stroke="#2a9a2a" stroke-width="2.0" stroke-linejoin="bevel"/>
<path d="M793.30 629.40 L797.93 629.40 L802.55 629.40 L807.18 629.40 L811.80 629.40 L816.43 629.40 L821.06 629.40 L825.68 629.40 L830.31 629.40 L834.93 629.40 L839.56 629.40 L844.19 629.40 L848.81 629.40 L853.44 629.40 L858.06 629.40 L862.69 629.40 L867.32 629.40 L871.94 629.40 L876.57 629.40 L881.19 629.40 L885.82 629.40 L890.45 629.40 L895.07 629.40 L899.70 629.40 L904.32 629.40 L908.95 629.40 L913.58 629.40 L918.20 629.40 L922.83 629.40 L927.45 629.40 L932.08 629.40 L936.71 629.40 L941.33 629.40 L945.96 629.40 L950.58 629.40 L955.21 629.40 L959.84 629.40 L964.46 629.40 L969.09 629.40 L973.71 629.40 L978.34 629.40 L982.97 629.40 L987.59 629.40 L992.22 629.40 L996.84 629.40 L1001.47 629.40 L1006.10 629.40 L1010.72 629.40 L1015.35 629.40 L1019.97 629.40 L1024.60 629.40 L1029.23 629.40 L1033.85 629.40 L1038.48 629.40 L1043.10 629.40 L1047.73 629.40 L1052.36 629.40 L1056.98 629.40 L1061.61 629.40 L1066.23 629.40 L1070.86 629.40 L1075.49 629.40 L1080.11 629.40 L1084.74 629.40 L1089.36 629.40 L1093.99 629.40 L1098.62 629.40 L1103.24 629.40 L1107.87 629.40 L1112.49 629.40 L1117.12 629.40 L1121.75 629.40 L1126.37 629.40 L1131.00 629.40 L1135.62 629.40 L1140.25 629.40 L1144.88 629.40 L1149.50 629.40 L1154.13 629.40 L1158.75 629.40 L1163.38 629.40 L1168.01 629.40 L1172.63 629.40 L1177.26 629.40 L1181.88 629.40 L1186.51 629.40 L1191.14 629.40 L1195.76 629.40 L1200.39 629.40 L1205.01 629.40 L1209.64 629.40 L1214.27 629.40 L1218.89 629.40 L1223.52 629.40 L1228.14 629.40 L1232.77 629.40 L1237.40 629.40 L1242.02 629.40 L1246.65 629.40 L1251.27 629.40 L1255.90 629.40" fill="none" stroke="#d0202d" stroke-width="2.0" stroke-linejoin="bevel"/>
<line x1="793.3" y1="630.50" x2="1255.9" y2="630.50" stroke="#262626" stroke-width="1"/>
<text x="842.6" y="657.0" font-size="12.00" fill="#232329" stroke="#232329" stroke-width="0.3" text-anchor="middle" textLength="32.2" lengthAdjust="spacingAndGlyphs">13:40</text>
<text x="919.7" y="657.0" font-size="12.00" fill="#232329" stroke="#232329" stroke-width="0.3" text-anchor="middle" textLength="32.2" lengthAdjust="spacingAndGlyphs">13:50</text>
<text x="996.8" y="657.0" font-size="12.00" fill="#232329" stroke="#232329" stroke-width="0.3" text-anchor="middle" textLength="32.2" lengthAdjust="spacingAndGlyphs">14:00</text>
<text x="1073.9" y="657.0" font-size="12.00" fill="#232329" stroke="#232329" stroke-width="0.3" text-anchor="middle" textLength="32.2" lengthAdjust="spacingAndGlyphs">14:10</text>
<text x="1151.0" y="657.0" font-size="12.00" fill="#232329" stroke="#232329" stroke-width="0.3" text-anchor="middle" textLength="32.2" lengthAdjust="spacingAndGlyphs">14:20</text>
<text x="1228.1" y="657.0" font-size="12.00" fill="#232329" stroke="#232329" stroke-width="0.3" text-anchor="middle" textLength="32.2" lengthAdjust="spacingAndGlyphs">14:30</text>
<text x="842.6" y="672.7" font-size="12.00" fill="#232329" stroke="#232329" stroke-width="0.3" text-anchor="middle" textLength="70.8" lengthAdjust="spacingAndGlyphs">Oct 31, 2022</text>
<line x1="858.1" y1="713.4" x2="887.6" y2="713.4" stroke="#1c63ab" stroke-width="2.4"/>
<text x="892.9" y="718.0" font-size="12.50" fill="#232329" stroke="#232329" stroke-width="0.3" text-anchor="start" textLength="36.4" lengthAdjust="spacingAndGlyphs">Delete</text>
<line x1="944.0" y1="713.4" x2="973.5" y2="713.4" stroke="#ff6d0e" stroke-width="2.4"/>
<text x="978.6" y="718.0" font-size="12.50" fill="#232329" stroke="#232329" stroke-width="0.3" text-anchor="start" textLength="32.5" lengthAdjust="spacingAndGlyphs">Insert</text>
<line x1="1025.4" y1="713.4" x2="1054.9" y2="713.4" stroke="#2a9a2a" stroke-width="2.4"/>
<text x="1060.3" y="718.0" font-size="12.50" fill="#232329" stroke="#232329" stroke-width="0.3" text-anchor="start" textLength="35.0" lengthAdjust="spacingAndGlyphs">Select</text>
<line x1="1110.0" y1="713.4" x2="1139.5" y2="713.4" stroke="#d0202d" stroke-width="2.4"/>
<text x="1145.0" y="718.0" font-size="12.50" fill="#232329" stroke="#232329" stroke-width="0.3" text-anchor="start" textLength="41.4" lengthAdjust="spacingAndGlyphs">Update</text>
<text x="176.4" y="780.1" font-size="15.50" fill="#232329" stroke="#232329" stroke-width="0.3" text-anchor="start">Total YSQL Connections</text>
<circle cx="679.2" cy="776.2" r="11.4" fill="#2e3470"/>
<g transform="translate(679.20 776.20)" fill="#fff"><path d="M0 -9.6 C0.9 -7.2 2.6 -6.2 2.3 -3.6 C3.1 -4.4 3.3 -5.6 3.1 -6.6 C4.7 -4.6 5.1 -2.1 4.3 0.2 L7.1 0.4 C6.6 2.4 5.6 3 4.5 3.2 H-4.5 C-5.6 3 -6.6 2.4 -7.1 0.4 L-4.3 0.2 C-5.1 -2.1 -4.7 -4.6 -3.1 -6.6 C-3.3 -5.6 -3.1 -4.4 -2.3 -3.6 C-2.6 -6.2 -0.9 -7.2 0 -9.6 Z"/><rect x="-5.3" y="4.1" width="10.6" height="1.6"/><path d="M-3 7 H3 A3 2.3 0 0 1 -3 7 Z"/></g>
<line x1="193.0" y1="857.10" x2="681.0" y2="857.10" stroke="#e6e6e6" stroke-width="1"/>
<line x1="193.0" y1="904.60" x2="681.0" y2="904.60" stroke="#e6e6e6" stroke-width="1"/>
<line x1="193.0" y1="952.00" x2="681.0" y2="952.00" stroke="#e6e6e6" stroke-width="1"/>
<line x1="193.0" y1="999.40" x2="681.0" y2="999.40" stroke="#e6e6e6" stroke-width="1"/>
<line x1="245.10" y1="814.8" x2="245.10" y2="1046.90" stroke="#e6e6e6" stroke-width="1"/>
<line x1="326.43" y1="814.8" x2="326.43" y2="1046.90" stroke="#e6e6e6" stroke-width="1"/>
<line x1="407.76" y1="814.8" x2="407.76" y2="1046.90" stroke="#e6e6e6" stroke-width="1"/>
<line x1="489.09" y1="814.8" x2="489.09" y2="1046.90" stroke="#e6e6e6" stroke-width="1"/>
<line x1="570.42" y1="814.8" x2="570.42" y2="1046.90" stroke="#e6e6e6" stroke-width="1"/>
<line x1="651.75" y1="814.8" x2="651.75" y2="1046.90" stroke="#e6e6e6" stroke-width="1"/>
<text x="177.6" y="861.4" font-size="12.00" fill="#232329" stroke="#232329" stroke-width="0.3" text-anchor="end">4</text>
<text x="177.6" y="908.9" font-size="12.00" fill="#232329" stroke="#232329" stroke-width="0.3" text-anchor="end">3</text>
<text x="177.6" y="956.2" font-size="12.00" fill="#232329" stroke="#232329" stroke-width="0.3" text-anchor="end">2</text>
<text x="177.6" y="1003.6" font-size="12.00" fill="#232329" stroke="#232329" stroke-width="0.3" text-anchor="end">1</text>
<text x="177.6" y="1051.2" font-size="12.00" fill="#232329" stroke="#232329" stroke-width="0.3" text-anchor="end">0</text>
<path d="M193.00 1035.12 L197.88 1046.81 L202.76 1019.82 L207.64 1046.81 L212.52 1030.90 L217.40 1035.12 L222.28 1046.81 L227.16 1030.90 L232.04 1035.12 L236.92 1046.81 L241.80 1019.82 L246.68 1046.81 L251.56 1031.51 L256.44 1046.81 L261.32 1030.90 L266.20 1034.76 L271.08 1034.76 L275.96 1046.81 L280.84 1019.82 L285.72 1046.81 L290.60 1035.12 L295.48 1046.81 L300.36 1030.90 L305.24 1035.12 L310.12 1046.81 L315.00 1035.12 L319.88 1046.81 L324.76 1030.90 L329.64 1030.90 L334.52 1030.90 L339.40 1035.12 L344.28 1046.81 L349.16 1030.90 L354.04 1035.12 L358.92 1046.81 L363.80 1019.82 L368.68 1046.81 L373.56 1031.51 L378.44 1046.81 L383.32 1030.90 L388.20 1034.76 L393.08 1034.76 L397.96 1046.81 L402.84 1035.12 L407.72 1046.81 L412.60 1035.12 L417.48 1023.92 L422.36 1046.81 L427.24 1035.12 L432.12 1046.81 L437.00 1035.12 L441.88 1046.81 L446.76 1015.84 L451.64 1046.81 L456.52 1030.90 L461.40 1035.12 L466.28 1046.81 L471.16 1030.90 L476.04 1035.12 L480.92 1046.81 L485.80 1019.82 L490.68 1046.82 L495.56 1031.51 L500.44 1046.82 L505.32 1030.79 L510.20 1035.09 L515.08 1035.07 L519.96 1046.82 L524.84 1035.09 L529.72 1046.82 L534.60 1019.78 L539.48 1046.82 L544.36 1030.79 L549.24 1035.09 L554.12 1046.82 L559.00 1035.09 L563.88 1046.81 L568.76 1003.80 L573.64 1046.81 L578.52 1030.90 L583.40 1035.12 L588.28 1046.81 L593.16 1030.90 L598.04 1035.12 L602.92 1046.81 L607.80 1035.12 L612.68 1046.81 L617.56 1031.51 L622.44 1046.81 L627.32 1030.90 L632.20 1034.76 L637.08 1034.76 L641.96 1046.81 L646.84 1035.12 L651.72 1046.81 L656.60 1035.12 L661.48 1046.81 L666.36 1030.90 L671.24 1035.12 L676.12 1046.81 L681.00 1035.12" fill="none" stroke="#1c63ab" stroke-width="2.0" stroke-linejoin="bevel"/>
<path d="M193.00 892.77 L197.88 904.46 L202.76 877.47 L207.64 904.46 L212.52 888.55 L217.40 892.77 L222.28 904.46 L227.16 888.55 L232.04 892.77 L236.92 904.46 L241.80 877.47 L246.68 904.46 L251.56 889.16 L256.44 904.46 L261.32 888.55 L266.20 892.41 L271.08 892.41 L275.96 904.46 L280.84 877.47 L285.72 904.46 L290.60 892.77 L295.48 904.46 L300.36 888.55 L305.24 892.77 L310.12 904.46 L315.00 892.77 L319.88 904.46 L324.76 888.55 L329.64 888.55 L334.52 888.55 L339.40 892.77 L344.28 904.46 L349.16 888.55 L354.04 892.77 L358.92 904.46 L363.80 877.47 L368.68 904.46 L373.56 889.16 L378.44 904.46 L383.32 888.55 L388.20 892.41 L393.08 892.41 L397.96 904.46 L402.84 892.77 L407.72 904.46 L412.60 892.77 L417.48 881.57 L422.36 904.46 L427.24 892.77 L432.12 904.46 L437.00 892.77 L441.88 904.46 L446.76 873.49 L451.64 904.46 L456.52 888.55 L461.40 892.77 L466.28 904.46 L471.16 888.55 L476.04 892.77 L480.92 904.46 L485.80 877.47 L490.68 904.47 L495.56 889.16 L500.44 904.47 L505.32 888.44 L510.20 892.74 L515.08 892.72 L519.96 904.47 L524.84 892.74 L529.72 904.47 L534.60 877.43 L539.48 904.47 L544.36 888.44 L549.24 892.74 L554.12 904.47 L559.00 892.74 L563.88 904.46 L568.76 861.45 L573.64 904.46 L578.52 888.55 L583.40 892.77 L588.28 904.46 L593.16 888.55 L598.04 892.77 L602.92 904.46 L607.80 892.77 L612.68 904.46 L617.56 889.16 L622.44 904.46 L627.32 888.55 L632.20 892.41 L637.08 892.41 L641.96 904.46 L646.84 892.77 L651.72 904.46 L656.60 892.77 L661.48 904.46 L666.36 888.55 L671.24 892.77 L676.12 904.46 L681.00 892.77" fill="none" stroke="#ff6d0e" stroke-width="2.0" stroke-linejoin="bevel"/>
<line x1="193.0" y1="1047.50" x2="681.0" y2="1047.50" stroke="#262626" stroke-width="1"/>
<text x="245.1" y="1074.0" font-size="12.00" fill="#232329" stroke="#232329" stroke-width="0.3" text-anchor="middle" textLength="32.2" lengthAdjust="spacingAndGlyphs">13:40</text>
<text x="326.4" y="1074.0" font-size="12.00" fill="#232329" stroke="#232329" stroke-width="0.3" text-anchor="middle" textLength="32.2" lengthAdjust="spacingAndGlyphs">13:50</text>
<text x="407.8" y="1074.0" font-size="12.00" fill="#232329" stroke="#232329" stroke-width="0.3" text-anchor="middle" textLength="32.2" lengthAdjust="spacingAndGlyphs">14:00</text>
<text x="489.1" y="1074.0" font-size="12.00" fill="#232329" stroke="#232329" stroke-width="0.3" text-anchor="middle" textLength="32.2" lengthAdjust="spacingAndGlyphs">14:10</text>
<text x="570.4" y="1074.0" font-size="12.00" fill="#232329" stroke="#232329" stroke-width="0.3" text-anchor="middle" textLength="32.2" lengthAdjust="spacingAndGlyphs">14:20</text>
<text x="651.8" y="1074.0" font-size="12.00" fill="#232329" stroke="#232329" stroke-width="0.3" text-anchor="middle" textLength="32.2" lengthAdjust="spacingAndGlyphs">14:30</text>
<text x="245.1" y="1089.7" font-size="12.00" fill="#232329" stroke="#232329" stroke-width="0.3" text-anchor="middle" textLength="70.8" lengthAdjust="spacingAndGlyphs">Oct 31, 2022</text>
<line x1="361.0" y1="1130.4" x2="390.5" y2="1130.4" stroke="#1c63ab" stroke-width="2.4"/>
<text x="396.3" y="1135.0" font-size="12.50" fill="#232329" stroke="#232329" stroke-width="0.3" text-anchor="start" textLength="34.8" lengthAdjust="spacingAndGlyphs">Active</text>
<line x1="445.4" y1="1130.4" x2="474.9" y2="1130.4" stroke="#ff6d0e" stroke-width="2.4"/>
<text x="481.4" y="1135.0" font-size="12.50" fill="#232329" stroke="#232329" stroke-width="0.3" text-anchor="start" textLength="26.6" lengthAdjust="spacingAndGlyphs">Total</text>
</svg>
</body></html>
